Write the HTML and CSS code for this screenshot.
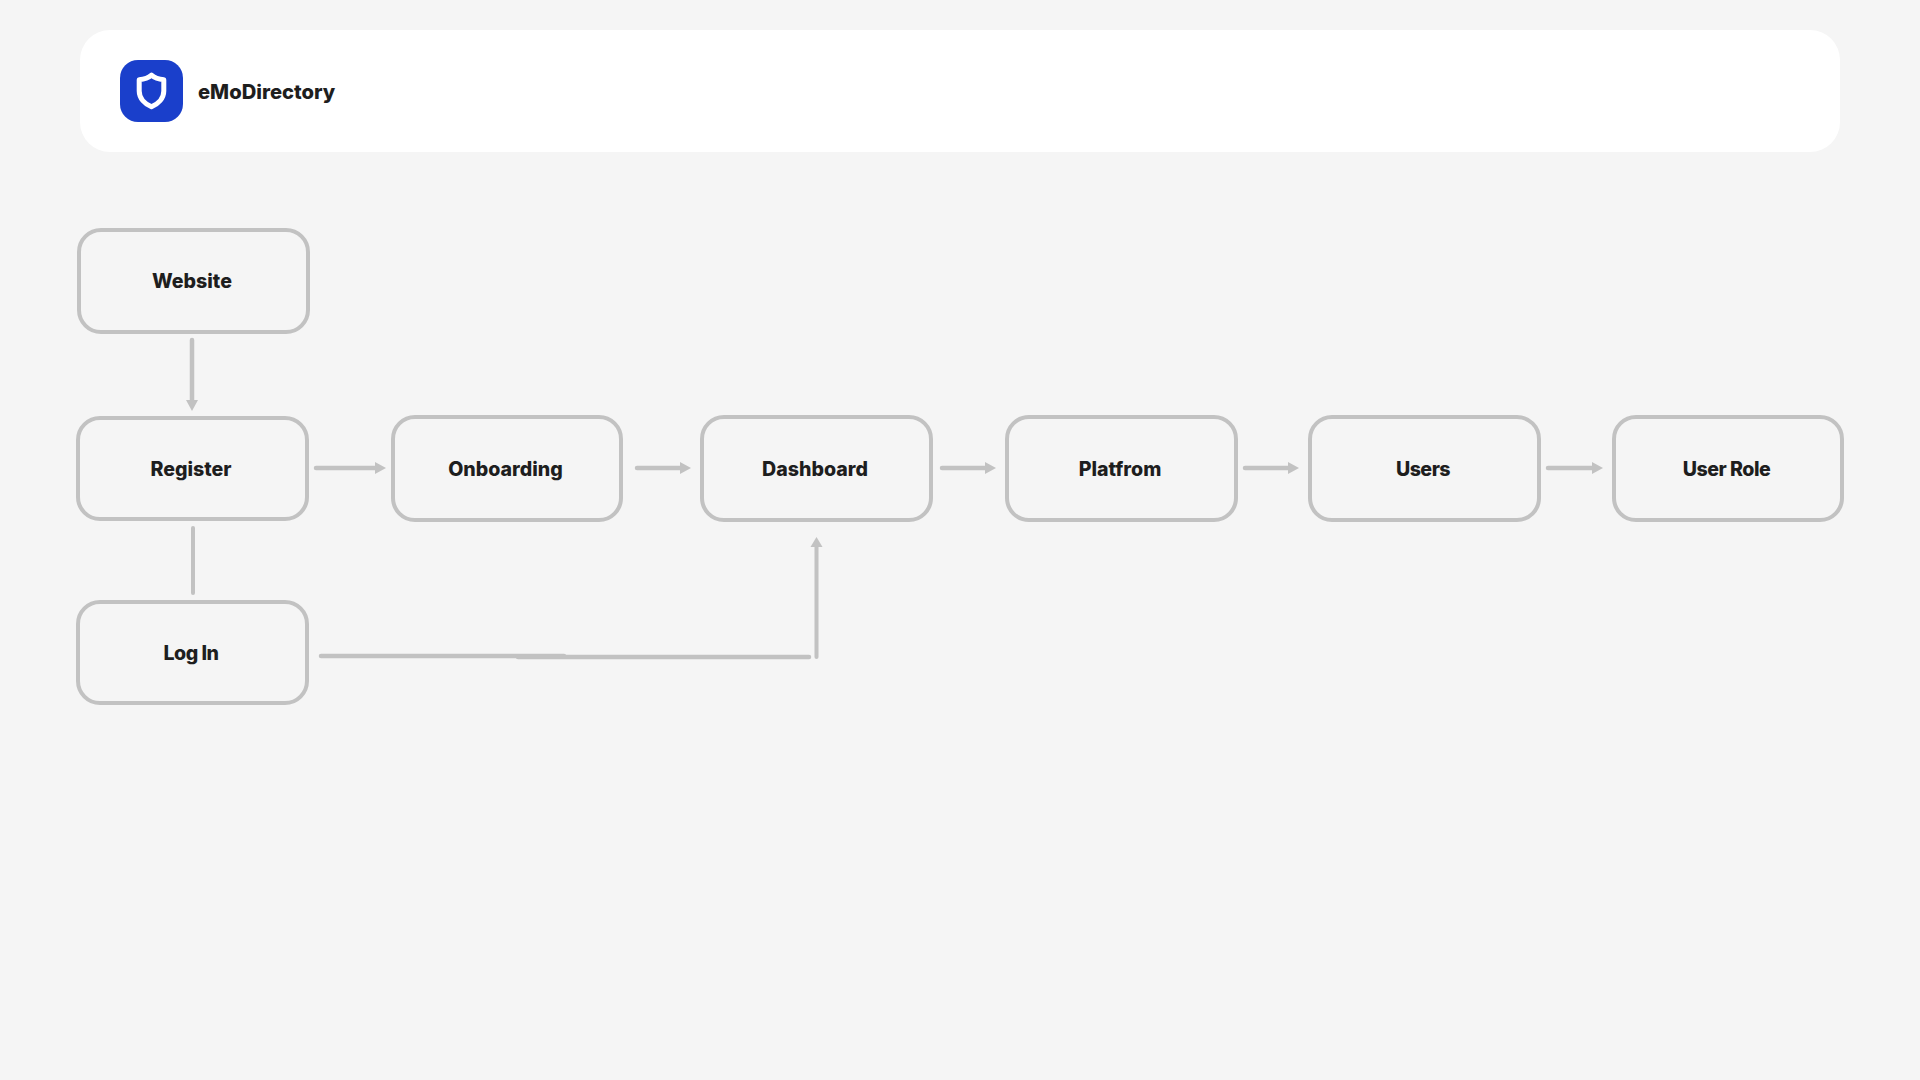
FILE: index.html
```html
<!DOCTYPE html>
<html lang="en">
<head>
<meta charset="utf-8">
<title>eMoDirectory</title>
<link rel="stylesheet" href="styles.css">
</head>
<body>
<header class="topbar">
  <div class="logo">
    <svg class="logo-icon" viewBox="0 0 63 62" aria-hidden="true">
      <path class="shield" d="M31.500 15.200 C34.500 17.800 39 19.300 43.800 19.800 V31 C43.800 38.500 38 44 31.500 46.800 C25 44 19.200 38.500 19.200 31 V19.800 C24 19.300 28.500 17.800 31.500 15.200 Z"/>
    </svg>
  </div>
  <span class="brand">eMoDirectory</span>
</header>
<main class="canvas">
  <svg class="links" viewBox="0 152 1920 928" aria-hidden="true">
    <line class="link" x1="192" y1="340" x2="192" y2="402"/>
    <polygon class="head" points="186,400 198,400 192,411"/>
    <line class="link thin" x1="193" y1="528" x2="193" y2="593"/>
    <line class="link" x1="316" y1="468" x2="376" y2="468"/>
    <polygon class="head" points="375,462 375,474 386,468"/>
    <line class="link" x1="637" y1="468" x2="681" y2="468"/>
    <polygon class="head" points="680,462 680,474 691,468"/>
    <line class="link" x1="942" y1="468" x2="986" y2="468"/>
    <polygon class="head" points="985,462 985,474 996,468"/>
    <line class="link" x1="1245" y1="468" x2="1289" y2="468"/>
    <polygon class="head" points="1288,462 1288,474 1299,468"/>
    <line class="link" x1="1548" y1="468" x2="1593" y2="468"/>
    <polygon class="head" points="1592,462 1592,474 1603,468"/>
    <line class="link" x1="321" y1="656" x2="564" y2="656"/>
    <line class="link" x1="518" y1="657" x2="809" y2="657"/>
    <line class="link thin" x1="816.500" y1="546" x2="816.500" y2="657"/>
    <polygon class="head" points="810.500,547 822.500,547 816.500,537"/>
  </svg>
  <div class="node website">Website</div>
  <div class="node register">Register</div>
  <div class="node onboarding">Onboarding</div>
  <div class="node dashboard">Dashboard</div>
  <div class="node platform">Platfrom</div>
  <div class="node users tight">Users</div>
  <div class="node role tight">User Role</div>
  <div class="node login tight">Log In</div>
</main>
</body>
</html>
```

FILE: styles.css
```css
* { box-sizing: border-box; }

html, body {
  margin: 0;
  height: 1080px;
  overflow: hidden;
  background: #f5f5f5;
  color: #1e1e1e;
  font-family: "Inter", "Liberation Sans", sans-serif;
}

.topbar {
  display: flex;
  align-items: center;
  gap: 15px;
  height: 122px;
  margin: 30px 80px 0;
  padding-left: 40px;
  background: #ffffff;
  border-radius: 30px;
}

.logo {
  width: 63px;
  height: 62px;
  border-radius: 18px;
  background: #1a3fcb;
}

.logo-icon {
  display: block;
  width: 63px;
  height: 62px;
}

.shield {
  fill: none;
  stroke: #ffffff;
  stroke-width: 5;
  stroke-linejoin: round;
}

.brand {
  font-size: 20.200px;
  font-weight: 800;
}

.canvas {
  position: relative;
  height: 928px;
}

.links {
  position: absolute;
  left: 0;
  top: 0;
  width: 1920px;
  height: 928px;
}

.link {
  stroke: #c2c2c2;
  stroke-width: 4.500;
  stroke-linecap: round;
}

.thin { stroke-width: 4; }

.head { fill: #c2c2c2; }

.node {
  position: absolute;
  display: flex;
  align-items: center;
  justify-content: center;
  padding-right: 3px;
  border: 4px solid #c2c2c2;
  border-radius: 24px;
  font-size: 19.600px;
  font-weight: 800;
}

.tight { letter-spacing: -0.500px; }

.website { left: 77px; top: 76px; width: 233px; height: 106px; }
.register { left: 76px; top: 264px; width: 233px; height: 105px; }
.onboarding { left: 391px; top: 263px; width: 232px; height: 107px; }
.dashboard { left: 700px; top: 263px; width: 233px; height: 107px; }
.platform { left: 1005px; top: 263px; width: 233px; height: 107px; }
.users { left: 1308px; top: 263px; width: 233px; height: 107px; }
.role { left: 1612px; top: 263px; width: 232px; height: 107px; }
.login { left: 76px; top: 448px; width: 233px; height: 105px; }
```
